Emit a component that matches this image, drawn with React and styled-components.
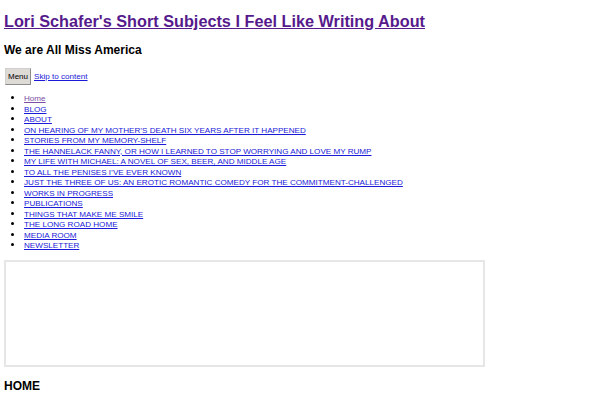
import React from 'react';
import styled, { createGlobalStyle } from 'styled-components';

const Global = createGlobalStyle`
  body {
    margin: 0;
    background: #fff;
    font-family: "Liberation Sans", Arial, sans-serif;
    color: #000;
  }
  a { color: #1a1ad8; }
`

const Page = styled.div`
  padding: 0 4px;
`

const SiteTitle = styled.h1`
  margin: 0;
  padding-top: 11px;
  font-size: 16.25px;
  line-height: 20px;
  font-weight: bold;
  a {
    color: #561a8c;
    text-decoration: underline;
  }
`

const Tagline = styled.h2`
  margin: 12px 0 0;
  font-size: 12px;
  line-height: 14px;
  font-weight: bold;
`

const MenuRow = styled.div`
  display: flex;
  align-items: center;
  gap: 3px;
  margin-top: 11px;
  padding-left: 1px;
`

const MenuButton = styled.button`
  font-family: "Liberation Sans", Arial, sans-serif;
  font-size: 8px;
  padding: 0 2px;
  height: 17px;
  width: 26px;
  background: #dedbd6;
  border: 1px solid #8c8c8c;
  border-top-color: #d0d0d0;
  border-left-color: #d0d0d0;
  color: #000;
`

const SkipLink = styled.a`
  font-size: 8.1px;
`

const NavList = styled.ul`
  margin: 8px 0 0;
  padding-left: 20px;
  font-size: 8.1px;
  line-height: 10.5px;
`

const NavItem = styled.li`
  height: 10.5px;
  &::marker {
    font-size: 9.5px;
  }
  a {
    color: ${p => (p.$visited ? '#7b4fa6' : '#1a1ad8')};
  }
`

const Frame = styled.div`
  margin-top: 9px;
  width: 477px;
  height: 103px;
  border: 2px solid #e6e6e6;
`

const SectionTitle = styled.h3`
  margin: 12px 0 0;
  font-size: 12px;
  line-height: 14px;
  font-weight: bold;
`

const pages = [
  'Home',
  'BLOG',
  'ABOUT',
  'ON HEARING OF MY MOTHER\u2019S DEATH SIX YEARS AFTER IT HAPPENED',
  'STORIES FROM MY MEMORY-SHELF',
  'THE HANNELACK FANNY, OR HOW I LEARNED TO STOP WORRYING AND LOVE MY RUMP',
  'MY LIFE WITH MICHAEL: A NOVEL OF SEX, BEER, AND MIDDLE AGE',
  'TO ALL THE PENISES I\u2019VE EVER KNOWN',
  'JUST THE THREE OF US: AN EROTIC ROMANTIC COMEDY FOR THE COMMITMENT-CHALLENGED',
  'WORKS IN PROGRESS',
  'PUBLICATIONS',
  'THINGS THAT MAKE ME SMILE',
  'THE LONG ROAD HOME',
  'MEDIA ROOM',
  'NEWSLETTER',
]

export default function App() {
  return (
    <Page>
      <Global />
      <SiteTitle><a href="#">Lori Schafer's Short Subjects I Feel Like Writing About</a></SiteTitle>
      <Tagline>We are All Miss America</Tagline>
      <MenuRow>
        <MenuButton>Menu</MenuButton>
        <SkipLink href="#">Skip to content</SkipLink>
      </MenuRow>
      <NavList>
        {pages.map((p, i) => (
          <NavItem key={p} $visited={i === 0}><a href="#">{p}</a></NavItem>
        ))}
      </NavList>
      <Frame />
      <SectionTitle>HOME</SectionTitle>
    </Page>
  )
}
